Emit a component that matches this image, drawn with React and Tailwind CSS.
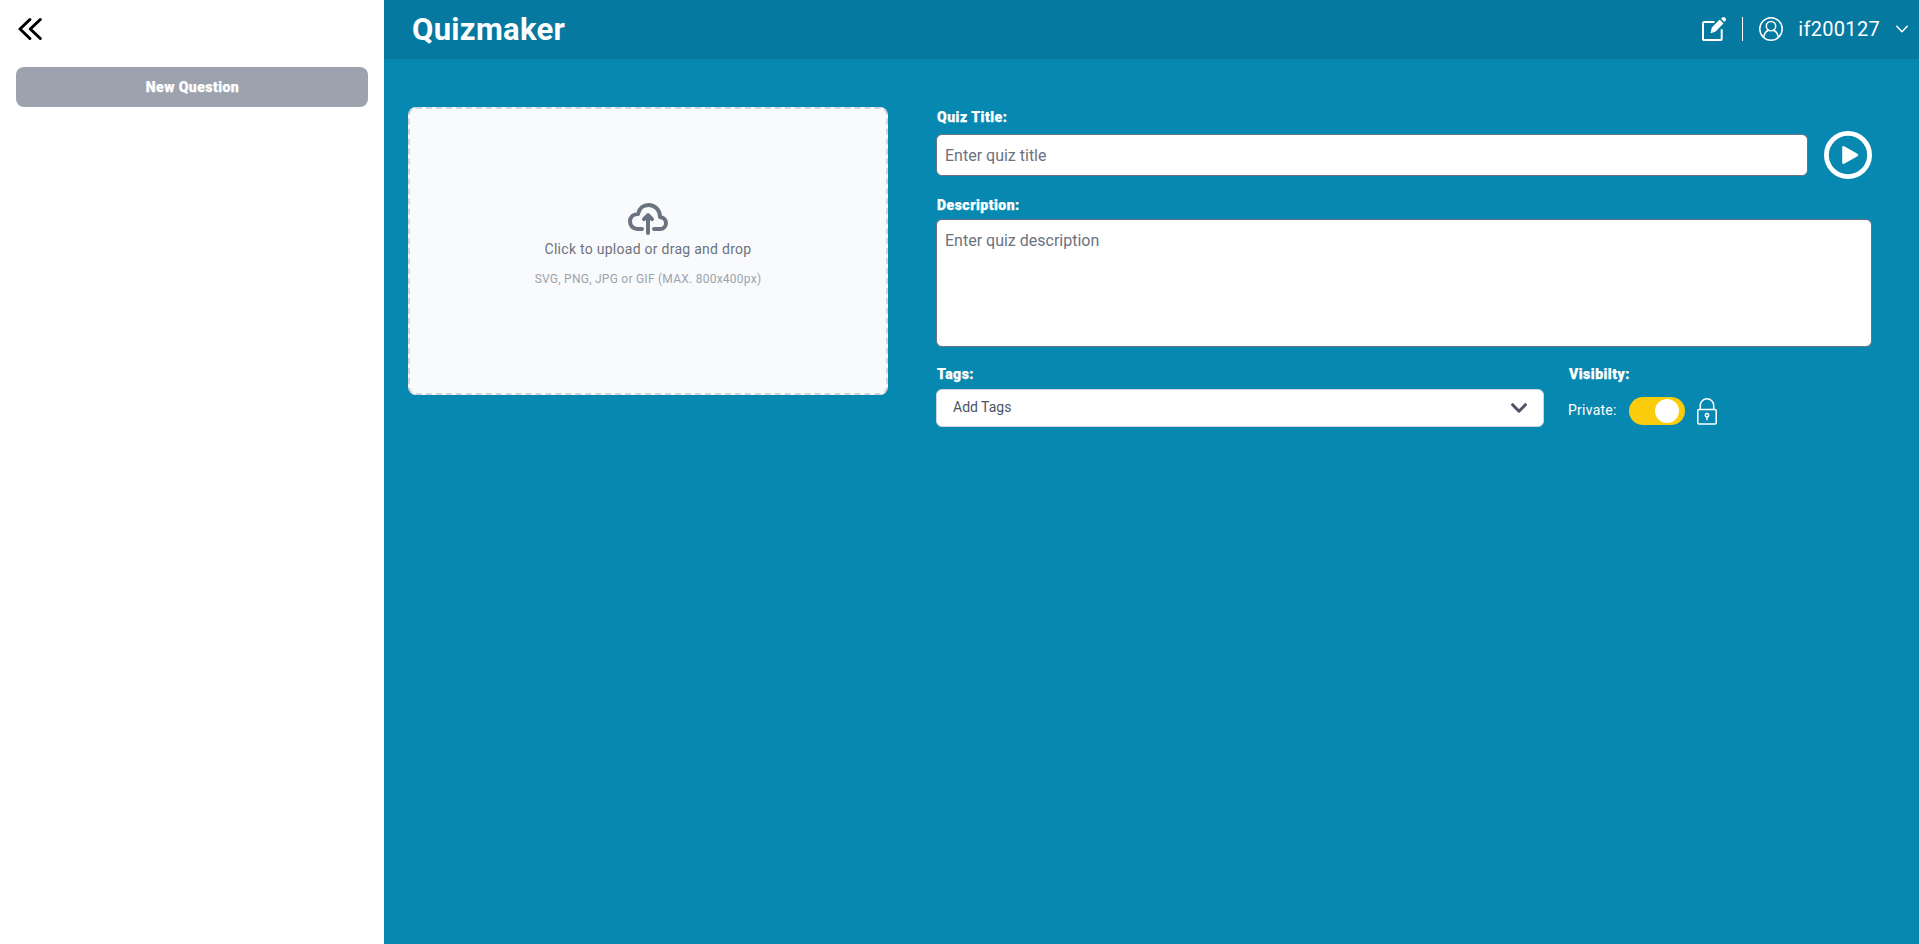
import React from "react";

function CollapseIcon() {
  return (
    <svg className="h-6 w-6" viewBox="0 0 24 24" fill="none" stroke="#000" strokeWidth="3" strokeLinecap="round" strokeLinejoin="round">
      <path d="M11.900 2.500 2 12l9.900 9.500M22.300 2.500 12.300 12l10 9.500" />
    </svg>
  );
}

function EditIcon() {
  return (
    <svg className="h-6 w-6" viewBox="0 0 24 24" fill="none">
      <path d="M11.5 4.9H2.6A1.6 1.6 0 0 0 1 6.500V21.400A1.6 1.6 0 0 0 2.600 23H18.100A1.600 1.600 0 0 0 19.700 21.400V13.200" stroke="#fff" strokeWidth="2" strokeLinecap="square" />
      <path d="M17.600 3.400 20.700 6.400 12.900 14.200 9.300 15.500 10.400 11Z" fill="#fff" stroke="#fff" strokeWidth="1.300" strokeLinejoin="round" />
      <path d="M19.500 1.700 21 .5Q22 0 22.900.9L23.500 1.600Q24.100 2.600 23.400 3.400L22.300 4.600Z" fill="#fff" stroke="#fff" strokeWidth=".8" strokeLinejoin="round" />
    </svg>
  );
}

function UserIcon() {
  return (
    <svg className="h-6 w-6" viewBox="0 0 24 24" fill="none" stroke="#fff" strokeWidth="1.5">
      <circle cx="12" cy="12" r="11.2" />
      <circle cx="12" cy="9.100" r="4.700" />
      <path d="M4.600 20.200C5.200 16.700 7 14.200 9.600 13.200M14.400 13.200C17 14.200 18.800 16.700 19.400 20.200" />
    </svg>
  );
}

function UploadIcon() {
  return (
    <svg className="h-8 w-10" viewBox="0 0 40 32" fill="none" stroke="#6b7280" strokeWidth="4" strokeLinecap="round" strokeLinejoin="round">
      <path d="M14 26H9.500C5 26 2 22.500 2 18.500C2 14 5.500 11 10 11C11.200 5.400 15.500 2 20.500 2C27 2 32 7 32 14C35.500 14.300 38 16.800 38 20C38 23.500 35.500 26 32 26H26" />
      <path d="M20 30V13M16 16.200 20 12.200 24 16.200" />
    </svg>
  );
}

function PlayIcon() {
  return (
    <svg className="h-12 w-12 shrink-0" viewBox="0 0 48 48" fill="none">
      <circle cx="24" cy="24" r="21.600" stroke="#fff" strokeWidth="4.800" />
      <path d="M19.500 16.300 32.800 24 19.500 31.700Z" fill="#fff" stroke="#fff" strokeWidth="2.600" strokeLinejoin="round" />
    </svg>
  );
}

function LockIcon() {
  return (
    <svg className="h-[27px] w-5" viewBox="0 0 20 27" fill="none" stroke="#fff" strokeWidth="1.500">
      <rect x=".8" y="11.500" width="18.400" height="14.500" rx="1.300" />
      <path d="M3.300 11.500V7.500a6.700 6.700 0 0 1 13.400 0V11.500" />
      <circle cx="10" cy="17.200" r="1.700" />
      <path d="M10 19V22.300" />
    </svg>
  );
}

function Label({ children }) {
  return <div className="h-5 pl-px text-sm leading-5 font-black tracking-[0.5px] text-white [-webkit-text-stroke:0.25px_#fff]">{children}</div>;
}

export default function App() {
  return (
    <div className="flex h-screen w-full overflow-hidden bg-[#0788b1] font-[Roboto,sans-serif]">
      <aside className="flex w-96 shrink-0 flex-col bg-white px-4">
        <button className="mt-[17px] ml-0.5 h-6 w-6" aria-label="Collapse">
          <CollapseIcon />
        </button>
        <button className="mt-[26px] h-10 w-full rounded-lg bg-[#9ca3af] pl-px text-sm font-black tracking-[0.45px] text-white [-webkit-text-stroke:0.25px_#fff]">New Question</button>
      </aside>

      <div className="flex min-w-0 flex-1 flex-col">
        <header className="flex h-[59px] shrink-0 items-center bg-[#05799f] pr-[11px] pl-7 text-white">
          <h1 className="flex-1 text-[31px] leading-9 font-bold tracking-[0.3px]">Quizmaker</h1>
          <div className="mb-px flex items-center">
            <EditIcon />
            <div className="ml-4 h-6 w-px bg-white" />
            <div className="ml-4">
              <UserIcon />
            </div>
            <span className="ml-[15px] text-xl leading-7 tracking-[0.3px]">if200127</span>
            <svg className="ml-4 h-3 w-3" viewBox="0 0 12 12" fill="none" stroke="#fff" strokeWidth="1.500" strokeLinecap="round" strokeLinejoin="round">
              <path d="M.8 3.300 6 8.700 11.200 3.300" />
            </svg>
          </div>
        </header>

        <main className="flex pt-12 pr-[47px] pl-6">
          <div className="flex h-72 w-[480px] shrink-0 flex-col items-center rounded-lg border-2 border-dashed border-[#d1d5db] bg-[#f9fafb] pt-[94px]">
            <UploadIcon />
            <p className="mt-1 text-sm leading-5 tracking-[0.27px] text-[#6b7280]">Click to upload or drag and drop</p>
            <p className="mt-3 text-xs leading-4 tracking-[0.25px] text-[#9ca3af]">SVG, PNG, JPG or GIF (MAX. 800x400px)</p>
          </div>

          <div className="ml-12 flex min-w-0 flex-1 flex-col">
            <Label>Quiz Title:</Label>
            <div className="mt-1 flex h-12 items-center gap-4">
              <input className="h-[42px] min-w-0 flex-1 rounded-md border border-[#6b7280] bg-white px-2 text-base placeholder-[#6b7280]" placeholder="Enter quiz title" />
              <PlayIcon />
            </div>
            <div className="mt-4">
              <Label>Description:</Label>
            </div>
            <textarea className="mt-1 h-32 resize-none rounded-md border border-[#6b7280] bg-white px-2 pt-[9px] pb-2 text-base placeholder-[#6b7280]" placeholder="Enter quiz description" />
            <div className="mt-[17px] flex gap-6">
              <div className="w-[608px]">
                <Label>Tags:</Label>
                <div className="mt-[5px] flex h-[38px] items-center rounded-md border border-[#d1d5db] bg-white pr-4 pl-4 text-sm text-[#4b5563]">
                  <span className="flex-1 pb-0.5">Add Tags</span>
                  <svg className="h-4 w-4" viewBox="0 0 16 16" fill="none" stroke="#4b5563" strokeWidth="3" strokeLinecap="round" strokeLinejoin="round">
                    <path d="M1.600 4.700 8 11.200 14.400 4.700" />
                  </svg>
                </div>
              </div>
              <div>
                <Label>Visibilty:</Label>
                <div className="mt-3 flex h-[30px] items-center">
                  <span className="w-[61px] pb-0.5 text-sm tracking-[0.25px] text-white">Private:</span>
                  <div className="flex h-7 w-14 items-center justify-end rounded-full bg-[#facc0c] pr-1.5">
                    <div className="h-6 w-6 rounded-full bg-white" />
                  </div>
                  <div className="ml-3">
                    <LockIcon />
                  </div>
                </div>
              </div>
            </div>
          </div>
        </main>
      </div>
    </div>
  );
}
